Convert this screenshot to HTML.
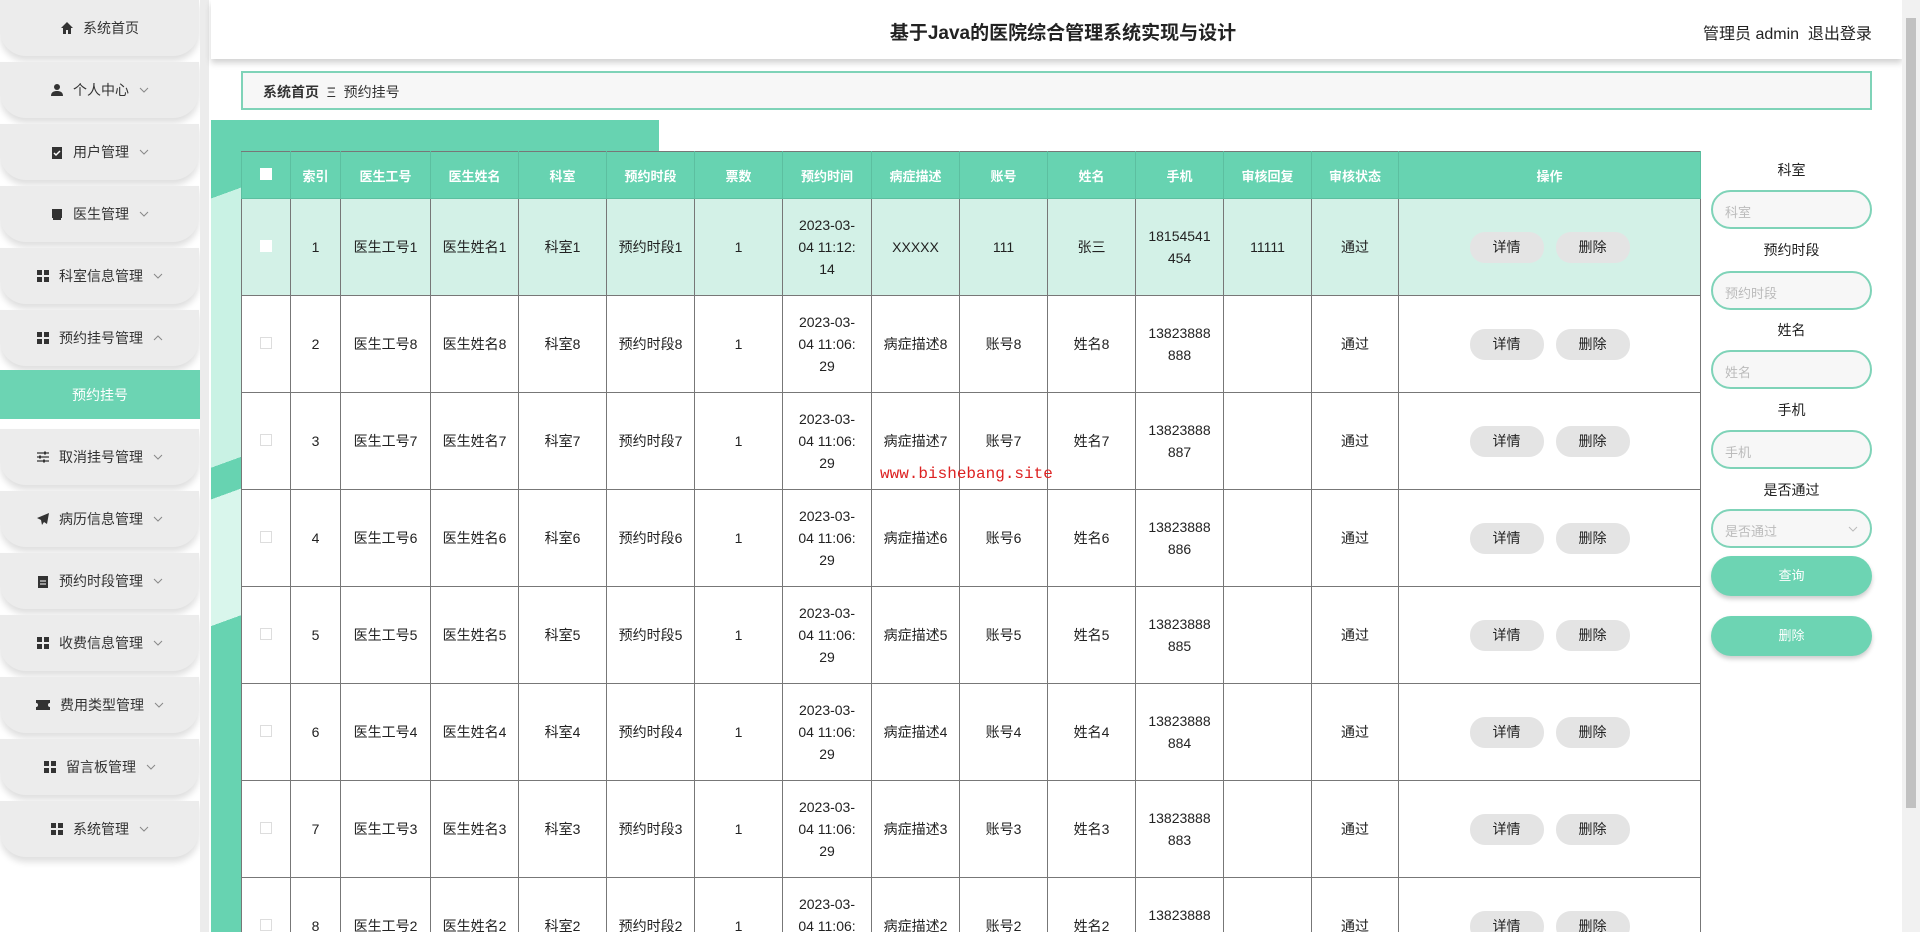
<!DOCTYPE html>
<html><head><meta charset="utf-8">
<style>
*{margin:0;padding:0;box-sizing:border-box}
html,body{width:1920px;height:932px;overflow:hidden}
body{background:#fff;font-family:"Liberation Sans","Noto Sans CJK SC",sans-serif;color:#333}
#w{position:relative;width:1920px;height:932px;overflow:hidden}
.side{position:absolute;left:0;top:0;width:200px;height:932px;background:#fff}
.strip{position:absolute;left:200px;top:0;width:9px;height:932px;background:#ececec}
.item{position:absolute;left:0;width:199px;height:56px;background:#ececec;border-radius:0 0 26px 26px;box-shadow:0 5px 7px rgba(0,0,0,.13);font-size:14px;color:#333;display:flex;align-items:center;justify-content:center}
.item svg{margin-right:9px}
.item .ch{margin-left:10px;margin-right:0}
.active{position:absolute;left:0;top:370px;width:200px;height:49px;background:#6cd4b3;color:#fff;font-size:14px;display:flex;align-items:center;justify-content:center}
.header{position:absolute;left:211px;top:0;width:1691px;height:59px;background:#fff;box-shadow:0 4px 6px rgba(0,0,0,.18)}
.title{position:absolute;left:0;width:1704px;top:18px;text-align:center;font-size:19px;font-weight:bold;color:#222}
.user{position:absolute;left:1492px;top:20px;font-size:16px;color:#222}
.sb{position:absolute;left:1902px;top:0;width:18px;height:932px;background:#f1f1f1}
.sb div{position:absolute;left:4px;top:18px;width:10px;height:790px;background:#c1c1c1}
.bc{position:absolute;left:241px;top:71px;width:1631px;height:39px;border:2px solid #7fd3b8;background:#f7f7f7;font-size:14px;padding:9px 0 0 20px}
.band{position:absolute;left:211px;top:120px;width:448px;height:32px;background:#67d3b1}
.deco{position:absolute;left:211px;top:151px;width:30px;height:781px;background:linear-gradient(160deg,#67d3b1 0 6%,#c9f2e4 6% 40%,#67d3b1 40% 44%,#d9f6ec 44% 60%,#67d3b1 60% 100%)}
table{position:absolute;left:241px;top:151px;width:1459px;border-collapse:collapse;table-layout:fixed;font-size:14px}
th{height:47px;background:#67d3b1;color:#fff;font-size:13px;font-weight:bold;border:1px solid #5cbfa0;border-top:1px solid #777}
td{height:97px;border:1px solid #777;text-align:center;line-height:22px;color:#222}
tr.h td{background:#d3f1e7}
.cb{display:inline-block;width:12px;height:12px;border:1px solid #ddd;background:#fff}
th .cb{border:none}
.btn{display:inline-block;width:74px;height:31px;line-height:31px;background:#e4e4e4;border-radius:15px;margin:0 6px;font-size:14px}
.lab{position:absolute;left:1711px;width:161px;text-align:center;font-size:14px;color:#222}
.inp{position:absolute;left:1711px;width:161px;height:39px;border:2px solid #7fd3b8;border-radius:20px;background:#f7f7f7;font-size:13px;color:#bbb;padding:10px 0 0 12px}
.gb{position:absolute;left:1711px;width:161px;height:40px;border-radius:20px;background:#6dd4b3;color:#fff;font-size:13px;text-align:center;line-height:40px;box-shadow:0 3px 5px rgba(0,0,0,.2)}
.wm{position:absolute;left:880px;top:465px;color:#d22;font-family:"Liberation Mono",monospace;font-size:16px}
</style></head><body><div id="w">
<div class="side">
<div class="item" style="top:0"><svg width="14" height="14" viewBox="0 0 14 14"><path d="M7 1L1 7h2v6h3V9h2v4h3V7h2z" fill="#333"/></svg>系统首页</div>
<div class="item" style="top:62px"><svg width="14" height="14" viewBox="0 0 14 14"><circle cx="7" cy="4" r="3" fill="#333"/><path d="M1 13c0-4 3-5 6-5s6 1 6 5z" fill="#333"/></svg>个人中心<svg class="ch" width="10" height="6" viewBox="0 0 10 6"><path d="M1 1l4 4 4-4" stroke="#888" fill="none"/></svg></div>
<div class="item" style="top:124px"><svg width="14" height="14" viewBox="0 0 14 14"><rect x="2" y="2" width="10" height="12" fill="#333"/><path d="M4 8l2 2 4-4" stroke="#fff" fill="none" stroke-width="1.5"/></svg>用户管理<svg class="ch" width="10" height="6" viewBox="0 0 10 6"><path d="M1 1l4 4 4-4" stroke="#888" fill="none"/></svg></div>
<div class="item" style="top:186px"><svg width="14" height="14" viewBox="0 0 14 14"><rect x="2" y="2" width="10" height="9" fill="#333"/><rect x="3" y="11" width="8" height="2" fill="#333"/></svg>医生管理<svg class="ch" width="10" height="6" viewBox="0 0 10 6"><path d="M1 1l4 4 4-4" stroke="#888" fill="none"/></svg></div>
<div class="item" style="top:248px"><svg width="14" height="14" viewBox="0 0 14 14"><rect x="1" y="1" width="5" height="5" fill="#333"/><rect x="8" y="1" width="5" height="5" fill="#333"/><rect x="1" y="8" width="5" height="5" fill="#333"/><rect x="8" y="8" width="5" height="5" fill="#333"/></svg>科室信息管理<svg class="ch" width="10" height="6" viewBox="0 0 10 6"><path d="M1 1l4 4 4-4" stroke="#888" fill="none"/></svg></div>
<div class="item" style="top:310px"><svg width="14" height="14" viewBox="0 0 14 14"><rect x="1" y="1" width="5" height="5" fill="#333"/><rect x="8" y="1" width="5" height="5" fill="#333"/><rect x="1" y="8" width="5" height="5" fill="#333"/><rect x="8" y="8" width="5" height="5" fill="#333"/></svg>预约挂号管理<svg class="ch" width="10" height="6" viewBox="0 0 10 6"><path d="M1 5l4-4 4 4" stroke="#888" fill="none"/></svg></div>
<div class="active">预约挂号</div>
<div class="item" style="top:429px"><svg width="14" height="14" viewBox="0 0 14 14"><path d="M1 3h12M1 7h12M1 11h12" stroke="#333" stroke-width="1.3"/><rect x="8" y="1.5" width="2" height="3" fill="#333"/><rect x="3" y="5.5" width="2" height="3" fill="#333"/><rect x="7" y="9.5" width="2" height="3" fill="#333"/></svg>取消挂号管理<svg class="ch" width="10" height="6" viewBox="0 0 10 6"><path d="M1 1l4 4 4-4" stroke="#888" fill="none"/></svg></div>
<div class="item" style="top:491px"><svg width="14" height="14" viewBox="0 0 14 14"><path d="M13 1L1 6l4 2 1 5 2-3 3 2z" fill="#333"/></svg>病历信息管理<svg class="ch" width="10" height="6" viewBox="0 0 10 6"><path d="M1 1l4 4 4-4" stroke="#888" fill="none"/></svg></div>
<div class="item" style="top:553px"><svg width="14" height="14" viewBox="0 0 14 14"><rect x="2" y="2" width="10" height="12" fill="#333"/><path d="M4 7h6M4 10h6" stroke="#fff"/></svg>预约时段管理<svg class="ch" width="10" height="6" viewBox="0 0 10 6"><path d="M1 1l4 4 4-4" stroke="#888" fill="none"/></svg></div>
<div class="item" style="top:615px"><svg width="14" height="14" viewBox="0 0 14 14"><rect x="1" y="1" width="5" height="5" fill="#333"/><rect x="8" y="1" width="5" height="5" fill="#333"/><rect x="1" y="8" width="5" height="5" fill="#333"/><rect x="8" y="8" width="5" height="5" fill="#333"/></svg>收费信息管理<svg class="ch" width="10" height="6" viewBox="0 0 10 6"><path d="M1 1l4 4 4-4" stroke="#888" fill="none"/></svg></div>
<div class="item" style="top:677px"><svg width="16" height="14" viewBox="0 0 16 14"><path d="M1 2h14v3a2 2 0 000 4v3H1V9a2 2 0 000-4z" fill="#333"/></svg>费用类型管理<svg class="ch" width="10" height="6" viewBox="0 0 10 6"><path d="M1 1l4 4 4-4" stroke="#888" fill="none"/></svg></div>
<div class="item" style="top:739px"><svg width="14" height="14" viewBox="0 0 14 14"><rect x="1" y="1" width="5" height="5" fill="#333"/><rect x="8" y="1" width="5" height="5" fill="#333"/><rect x="1" y="8" width="5" height="5" fill="#333"/><rect x="8" y="8" width="5" height="5" fill="#333"/></svg>留言板管理<svg class="ch" width="10" height="6" viewBox="0 0 10 6"><path d="M1 1l4 4 4-4" stroke="#888" fill="none"/></svg></div>
<div class="item" style="top:801px"><svg width="14" height="14" viewBox="0 0 14 14"><rect x="1" y="1" width="5" height="5" fill="#333"/><rect x="8" y="1" width="5" height="5" fill="#333"/><rect x="1" y="8" width="5" height="5" fill="#333"/><rect x="8" y="8" width="5" height="5" fill="#333"/></svg>系统管理<svg class="ch" width="10" height="6" viewBox="0 0 10 6"><path d="M1 1l4 4 4-4" stroke="#888" fill="none"/></svg></div>
</div>
<div class="strip"></div>
<div class="header"><div class="title">基于Java的医院综合管理系统实现与设计</div><div class="user">管理员 admin&nbsp;&nbsp;退出登录</div></div>
<div class="sb"><div></div></div>
<div class="bc"><b>系统首页</b>&nbsp;&nbsp;Ξ&nbsp;&nbsp;预约挂号</div>
<div class="band"></div>
<div class="deco"></div>
<table>
<colgroup><col style="width:49px"><col style="width:50px"><col style="width:90px"><col style="width:88px"><col style="width:88px"><col style="width:88px"><col style="width:88px"><col style="width:89px"><col style="width:88px"><col style="width:88px"><col style="width:88px"><col style="width:88px"><col style="width:88px"><col style="width:87px"><col style="width:302px"></colgroup>
<tr><th><span class="cb"></span></th><th>索引</th><th>医生工号</th><th>医生姓名</th><th>科室</th><th>预约时段</th><th>票数</th><th>预约时间</th><th>病症描述</th><th>账号</th><th>姓名</th><th>手机</th><th>审核回复</th><th>审核状态</th><th>操作</th></tr>
<tr class="h"><td><span class="cb" style="border:none"></span></td><td>1</td><td>医生工号1</td><td>医生姓名1</td><td>科室1</td><td>预约时段1</td><td>1</td><td>2023-03-<br>04 11:12:<br>14</td><td>XXXXX</td><td>111</td><td>张三</td><td>18154541<br>454</td><td>11111</td><td>通过</td><td><span class="btn">详情</span><span class="btn">删除</span></td></tr>
<tr><td><span class="cb"></span></td><td>2</td><td>医生工号8</td><td>医生姓名8</td><td>科室8</td><td>预约时段8</td><td>1</td><td>2023-03-<br>04 11:06:<br>29</td><td>病症描述8</td><td>账号8</td><td>姓名8</td><td>13823888<br>888</td><td></td><td>通过</td><td><span class="btn">详情</span><span class="btn">删除</span></td></tr>
<tr><td><span class="cb"></span></td><td>3</td><td>医生工号7</td><td>医生姓名7</td><td>科室7</td><td>预约时段7</td><td>1</td><td>2023-03-<br>04 11:06:<br>29</td><td>病症描述7</td><td>账号7</td><td>姓名7</td><td>13823888<br>887</td><td></td><td>通过</td><td><span class="btn">详情</span><span class="btn">删除</span></td></tr>
<tr><td><span class="cb"></span></td><td>4</td><td>医生工号6</td><td>医生姓名6</td><td>科室6</td><td>预约时段6</td><td>1</td><td>2023-03-<br>04 11:06:<br>29</td><td>病症描述6</td><td>账号6</td><td>姓名6</td><td>13823888<br>886</td><td></td><td>通过</td><td><span class="btn">详情</span><span class="btn">删除</span></td></tr>
<tr><td><span class="cb"></span></td><td>5</td><td>医生工号5</td><td>医生姓名5</td><td>科室5</td><td>预约时段5</td><td>1</td><td>2023-03-<br>04 11:06:<br>29</td><td>病症描述5</td><td>账号5</td><td>姓名5</td><td>13823888<br>885</td><td></td><td>通过</td><td><span class="btn">详情</span><span class="btn">删除</span></td></tr>
<tr><td><span class="cb"></span></td><td>6</td><td>医生工号4</td><td>医生姓名4</td><td>科室4</td><td>预约时段4</td><td>1</td><td>2023-03-<br>04 11:06:<br>29</td><td>病症描述4</td><td>账号4</td><td>姓名4</td><td>13823888<br>884</td><td></td><td>通过</td><td><span class="btn">详情</span><span class="btn">删除</span></td></tr>
<tr><td><span class="cb"></span></td><td>7</td><td>医生工号3</td><td>医生姓名3</td><td>科室3</td><td>预约时段3</td><td>1</td><td>2023-03-<br>04 11:06:<br>29</td><td>病症描述3</td><td>账号3</td><td>姓名3</td><td>13823888<br>883</td><td></td><td>通过</td><td><span class="btn">详情</span><span class="btn">删除</span></td></tr>
<tr><td><span class="cb"></span></td><td>8</td><td>医生工号2</td><td>医生姓名2</td><td>科室2</td><td>预约时段2</td><td>1</td><td>2023-03-<br>04 11:06:<br>29</td><td>病症描述2</td><td>账号2</td><td>姓名2</td><td>13823888<br>882</td><td></td><td>通过</td><td><span class="btn">详情</span><span class="btn">删除</span></td></tr>
</table>
<div class="lab" style="top:160px">科室</div><div class="inp" style="top:190px">科室</div>
<div class="lab" style="top:240px">预约时段</div><div class="inp" style="top:271px">预约时段</div>
<div class="lab" style="top:320px">姓名</div><div class="inp" style="top:350px">姓名</div>
<div class="lab" style="top:400px">手机</div><div class="inp" style="top:430px">手机</div>
<div class="lab" style="top:480px">是否通过</div><div class="inp" style="top:509px">是否通过<svg style="position:absolute;right:12px;top:15px" width="10" height="6" viewBox="0 0 10 6"><path d="M1 1l4 4 4-4" stroke="#bbb" fill="none"/></svg></div>
<div class="gb" style="top:556px">查询</div>
<div class="gb" style="top:616px">删除</div>
<div class="wm">www.bishebang.site</div>
</div></body></html>
